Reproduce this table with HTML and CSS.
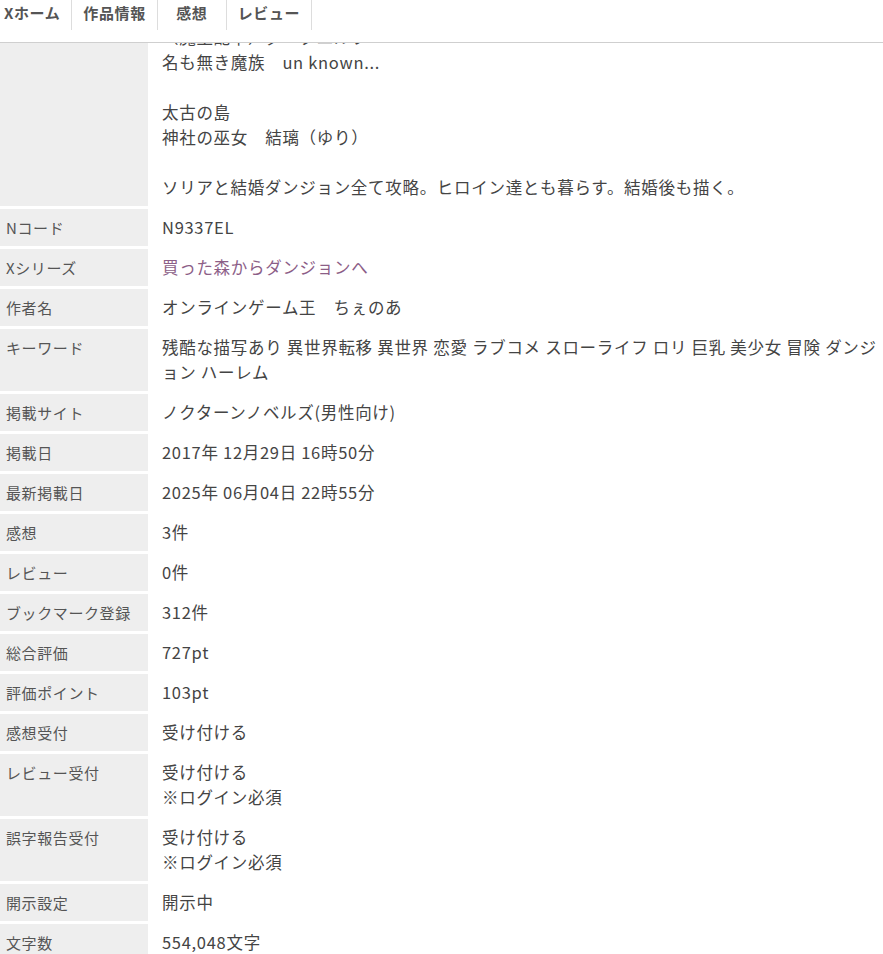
FILE: index.html
```html
<!DOCTYPE html>
<html lang="ja">
<head>
    <meta charset="UTF-8">
    <meta name="viewport" content="width=device-width, initial-scale=1.0">
    <title>作品情報</title>
    <link rel="stylesheet" href="styles.css">
</head>
<body>
    <header class="site-header">
        <nav class="tabs">
            <a class="tab tab-first" href="#">Xホーム</a>
            <a class="tab" href="#">作品情報</a>
            <a class="tab" href="#">感想</a>
            <a class="tab" href="#">レビュー</a>
        </nav>
    </header>

    <main class="page">
        <table class="info">
            <tr>
                <th></th>
                <td>（魔王配下）ダークエルフ<br>名も無き魔族　un known...<br><br>太古の島<br>神社の巫女　結璃（ゆり）<br><br>ソリアと結婚ダンジョン全て攻略。ヒロイン達とも暮らす。結婚後も描く。</td>
            </tr>
            <tr><th>Nコード</th><td>N9337EL</td></tr>
            <tr><th>Xシリーズ</th><td><a class="series" href="#">買った森からダンジョンへ</a></td></tr>
            <tr><th>作者名</th><td>オンラインゲーム王　ちぇのあ</td></tr>
            <tr><th>キーワード</th><td>残酷な描写あり 異世界転移 異世界 恋愛 ラブコメ スローライフ ロリ 巨乳 美少女 冒険 ダンジョン ハーレム</td></tr>
            <tr><th>掲載サイト</th><td>ノクターンノベルズ(男性向け)</td></tr>
            <tr><th>掲載日</th><td>2017年 12月29日 16時50分</td></tr>
            <tr><th>最新掲載日</th><td>2025年 06月04日 22時55分</td></tr>
            <tr><th>感想</th><td>3件</td></tr>
            <tr><th>レビュー</th><td>0件</td></tr>
            <tr><th>ブックマーク登録</th><td>312件</td></tr>
            <tr><th>総合評価</th><td>727pt</td></tr>
            <tr><th>評価ポイント</th><td>103pt</td></tr>
            <tr><th>感想受付</th><td>受け付ける</td></tr>
            <tr><th>レビュー受付</th><td>受け付ける<br>※ログイン必須</td></tr>
            <tr><th>誤字報告受付</th><td>受け付ける<br>※ログイン必須</td></tr>
            <tr><th>開示設定</th><td>開示中</td></tr>
            <tr><th>文字数</th><td>554,048文字</td></tr>
        </table>
    </main>
</body>
</html>
```

FILE: styles.css
```css
* {
    box-sizing: border-box;
}

html {
    overflow: hidden;
}

body {
    margin: 0;
    background-color: #fff;
    color: #444;
    font-family: "Noto Sans CJK JP", "Noto Sans", sans-serif;
}

.site-header {
    position: fixed;
    top: 0;
    left: 0;
    right: 0;
    height: 43px;
    background-color: #fff;
    border-bottom: 1px solid #cfcfcf;
    z-index: 10;
}

.tabs {
    display: flex;
}

.tab {
    display: block;
    height: 30px;
    min-width: 69px;
    padding: 0 11px;
    line-height: 26px;
    text-align: center;
    border-right: 1px solid #ddd;
    color: #555;
    font-weight: bold;
    font-size: 15px;
    letter-spacing: 0.04em;
    text-decoration: none;
}

.tab-first {
    padding-left: 4px;
    text-align: left;
}

.page {
    padding-top: 16px;
}

.info {
    width: 100%;
    border-collapse: separate;
    border-spacing: 0 3px;
}

.info th {
    width: 148px;
    padding: 6px 6px;
    background-color: #eee;
    color: #555;
    font-weight: normal;
    font-size: 15px;
    line-height: 25px;
    letter-spacing: 0.6px;
    text-align: left;
    vertical-align: top;
}

.info td {
    padding: 6px 0 6px 14px;
    font-size: 16.5px;
    line-height: 25px;
    letter-spacing: 0.7px;
    vertical-align: top;
}

.series {
    color: #8c5e87;
    text-decoration: none;
}
```
